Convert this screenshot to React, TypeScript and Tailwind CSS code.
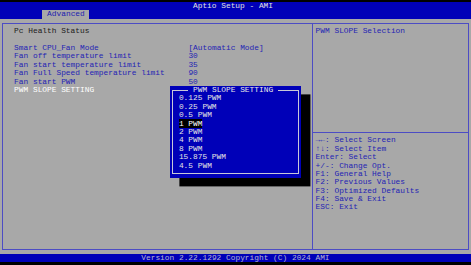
import React from 'react';

const items = [
  ['Smart CPU_Fan Mode', '[Automatic Mode]'],
  ['Fan off temperature limit', '30'],
  ['Fan start temperature limit', '35'],
  ['Fan Full Speed temperature limit', '90'],
  ['Fan start PWM', '50'],
];

const options = ['0.125 PWM', '0.25 PWM', '0.5 PWM', '1 PWM', '2 PWM', '4 PWM', '8 PWM', '15.875 PWM', '4.5 PWM'];

const help = [
  '→←: Select Screen',
  '↑↓: Select Item',
  'Enter: Select',
  '+/-: Change Opt.',
  'F1: General Help',
  'F2: Previous Values',
  'F3: Optimized Defaults',
  'F4: Save & Exit',
  'ESC: Exit',
];

export default function App() {
  return (
    <div className="relative w-[471px] h-[265px] overflow-hidden bg-black font-['Liberation_Mono','DejaVu_Sans_Mono',monospace] text-[7.85px] leading-[8.4px] whitespace-pre">
      <div className="h-[2px]" />

      {/* Title bar + tab */}
      <div className="bg-[#0000b8]">
        <div className="h-[8.4px] pl-[193px] text-[#e0e0e0]">Aptio Setup - AMI</div>
        <div className="h-[8.4px] pl-[42.4px]">
          <span className="inline-block h-[8.4px] w-[47.1px] bg-[#a8a8a8] pl-[4.71px] text-[#1c1cb0]">Advanced</span>
        </div>
      </div>

      {/* Main panel */}
      <div className="h-[235.2px] bg-[#a8a8a8] px-[2px] py-[4px]">
        <div className="flex h-full border border-[#4c4cc4]">
          <div className="w-[309px] pt-[3.4px] pl-[11.1px]">
            <div className="h-[8.4px] text-[#202020]">Pc Health Status</div>
            <div className="h-[8.4px]" />
            {items.map(([label, value]) => (
              <div key={label} className="flex h-[8.4px] text-[#2424b4]">
                <span className="w-[174.3px]">{label}</span>
                <span>{value}</span>
              </div>
            ))}
            <div className="h-[8.4px] text-white">PWM SLOPE SETTING</div>
          </div>

          <div className="flex-1 border-l border-[#4c4cc4]">
            <div className="h-[108.2px] pt-[3.4px] pl-[2.6px] text-[#2424b4]">PWM SLOPE Selection</div>
            <div className="border-t border-[#4c4cc4] pt-[3.4px] pl-[2.6px] text-[#2424b4]">
              {help.map((h) => (
                <div key={h} className="h-[8.4px]">{h}</div>
              ))}
            </div>
          </div>
        </div>
      </div>

      {/* Footer */}
      <div className="h-[8.4px] bg-[#0000b8] pl-[141.3px] text-[#b4b4d4]">
        Version 2.22.1292 Copyright (C) 2024 AMI
      </div>

      {/* Popup */}
      <div className="absolute left-[169.6px] top-[86px] h-[92.4px] w-[131.9px] bg-[#0000b8] px-[2px] py-[4px] shadow-[9.4px_8.4px_0_#000]">
        <div className="relative h-full border border-[#c8c8d8] pt-[3.4px] pl-[6.3px] text-[#e4e4e4]">
          <span className="absolute left-[15.8px] top-[-4.7px] h-[8.4px] bg-[#0000b8] px-[4.71px] text-[#e8e8e8]">
            PWM SLOPE SETTING
          </span>
          {options.map((o) => (
            <div key={o} className="h-[8.4px]">
              {o === '1 PWM' ? <span className="bg-black text-white">{o}</span> : o}
            </div>
          ))}
        </div>
      </div>
    </div>
  );
}
